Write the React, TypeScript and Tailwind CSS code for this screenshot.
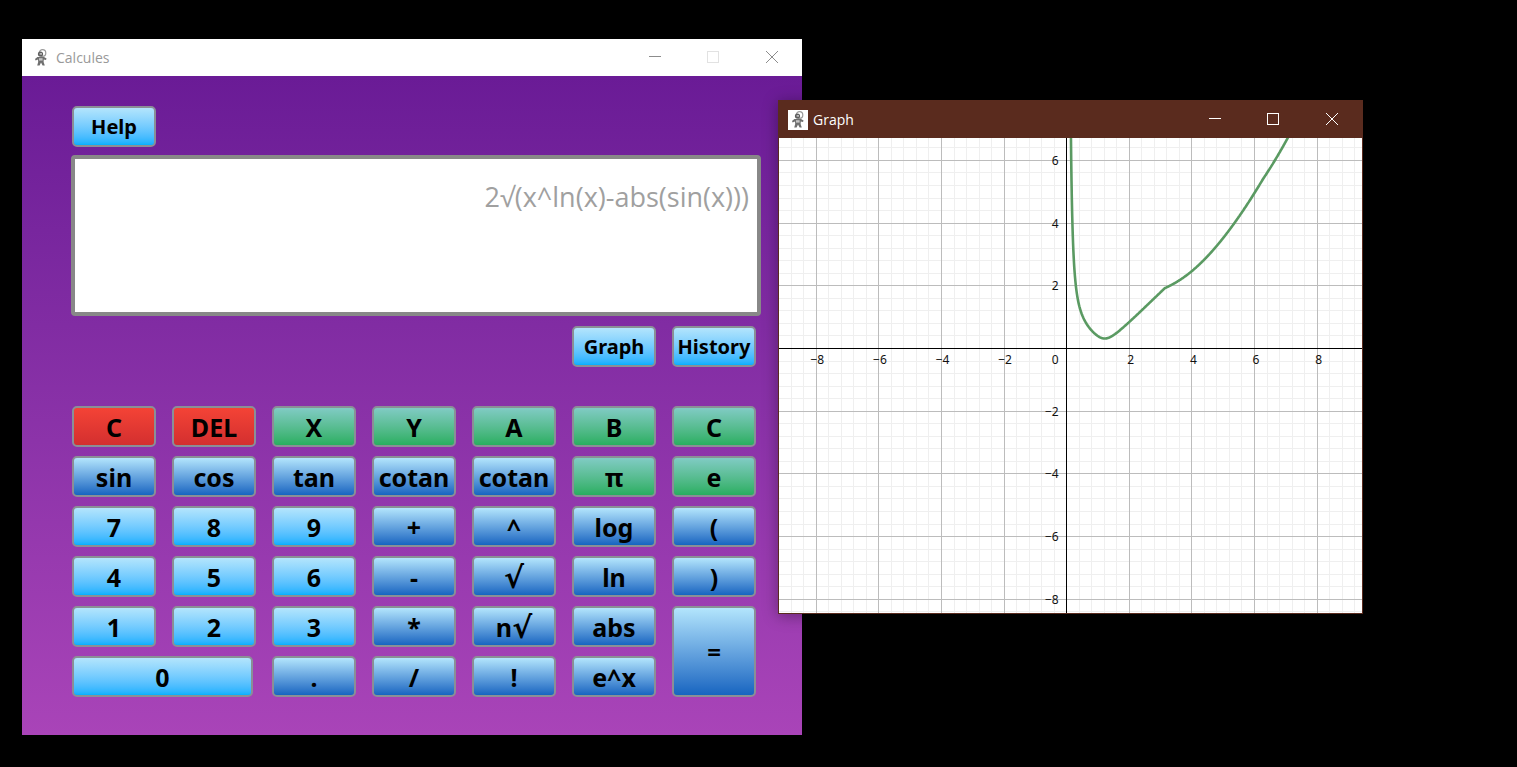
import React from "react";

const btnBase =
  "flex items-center justify-center rounded-[5px] border-2 border-[#8a8f96] font-bold text-black leading-none [font-family:'Noto_Sans',sans-serif]";
const variants: Record<string, string> = {
  num: "bg-gradient-to-b from-[#b3e5fc] to-[#00b0ff]",
  op: "bg-gradient-to-b from-[#b3e5fc] to-[#1565c0]",
  red: "bg-gradient-to-b from-[#f44336] to-[#d32f2f]",
  green: "bg-gradient-to-b from-[#80cbc4] to-[#27ae60]",
};

function Btn({
  label,
  v,
  className = "",
  size = "text-[25px] pt-[2px]",
}: {
  label: React.ReactNode;
  v: string;
  className?: string;
  size?: string;
}) {
  return <div className={`${btnBase} ${variants[v]} ${size} ${className}`}>{label}</div>;
}

function Root() {
  return <span className="text-[30px] leading-none [font-family:'DejaVu_Sans',sans-serif]">√</span>;
}

function Astronaut({ className }: { className: string }) {
  return (
    <svg viewBox="0 0 18 18" className={className}>
      <circle cx="10.5" cy="4" r="3.3" fill="none" stroke="#9a9a9a" strokeWidth="1.2" />
      <circle cx="8.5" cy="5" r="2.6" fill="#5e5e5e" />
      <rect x="7.6" y="4.2" width="2.4" height="1.4" fill="#cfcfcf" />
      <path d="M5.4 8 L12 8 L14.6 9.6 L14 11 L11.8 10.4 L11.6 13 L12.8 16.6 L10.6 16.6 L9 13.6 L7.6 16.6 L5.2 16.6 L6.2 13 L6 10.6 L3.6 11.4 L3 10 Z" fill="#6f6f6f" />
      <rect x="7" y="9.2" width="3.6" height="2.4" fill="#c4c4c4" />
    </svg>
  );
}

const UNIT_X = 31.3;
const UNIT_Y = 31.35;
const X0 = 287.7;
const Y0 = 210.5;
const W = 583;
const H = 475;
const snap = (v: number) => Math.floor(v) + 0.5;

function curve() {
  const pts: string[] = [];
  for (let x = 0.02; x < 8; x += 0.01) {
    const lx = Math.log(x);
    const v = Math.pow(x, lx) - Math.abs(Math.sin(x));
    if (v < 0) continue;
    const y = Math.sqrt(v);
    const py = Y0 - y * UNIT_Y;
    if (py < -40) continue;
    pts.push(`${(X0 - 0.2 + x * UNIT_X).toFixed(2)},${py.toFixed(2)}`);
  }
  return "M" + pts.join(" L");
}

function Plot() {
  const minor: React.ReactNode[] = [];
  const major: React.ReactNode[] = [];
  const labels: React.ReactNode[] = [];
  for (let i = -50; i <= 50; i++) {
    const x = snap(X0 + i * 0.4 * UNIT_X);
    const y = snap(Y0 - i * 0.4 * UNIT_Y);
    const isMajor = i % 5 === 0;
    const target = isMajor ? major : minor;
    const stroke = isMajor ? "#bcbcbc" : "#efefef";
    if (i !== 0) {
      if (x >= 0 && x <= W) target.push(<line key={`v${i}`} x1={x} x2={x} y1={0} y2={H} stroke={stroke} strokeWidth={1} />);
      if (y >= 0 && y <= H) target.push(<line key={`h${i}`} x1={0} x2={W} y1={y} y2={y} stroke={stroke} strokeWidth={1} />);
    }
  }
  const textProps = { fontSize: 12, fill: "#111", fontFamily: "'Noto Sans', sans-serif" };
  for (const n of [-8, -6, -4, -2, 2, 4, 6, 8]) {
    const s = n < 0 ? `−${-n}` : `${n}`;
    labels.push(
      <text key={`x${n}`} x={X0 + n * UNIT_X + (n < 0 ? 1 : 1.5)} y={Y0 + 15} textAnchor="middle" {...textProps}>
        {s}
      </text>,
    );
    if (n !== 8) {
      labels.push(
        <text key={`y${n}`} x={X0 - 8} y={Y0 - n * UNIT_Y + 4.5} textAnchor="end" {...textProps}>
          {s}
        </text>,
      );
    }
  }
  labels.push(
    <text key="zero" x={X0 - 8} y={Y0 + 15} textAnchor="end" {...textProps}>
      0
    </text>,
  );
  return (
    <svg width={W} height={H} viewBox={`0 0 ${W} ${H}`} className="block bg-white">
      {minor}
      {major}
      <line x1={0} x2={W} y1={Y0} y2={Y0} stroke="#000" strokeWidth={1} />
      <line x1={snap(X0)} x2={snap(X0)} y1={0} y2={H} stroke="#000" strokeWidth={1} />
      {labels}
      <path d={curve()} fill="none" stroke="#5a9a62" strokeWidth={2.6} strokeLinejoin="round" />
    </svg>
  );
}

function WinControls({ color, maxColor }: { color: string; maxColor: string }) {
  return (
    <svg width="174" height="14" viewBox="0 0 174 14" className="ml-auto block self-start mt-[12px]">
      <line x1="21" x2="33" y1="5.5" y2="5.5" stroke={color} strokeWidth="1" />
      <rect x="79.5" y="0.5" width="11" height="11" fill="none" stroke={maxColor} strokeWidth="1" />
      <path d="M138 0 L150 12 M150 0 L138 12" fill="none" stroke={color} strokeWidth="1" />
    </svg>
  );
}

export default function App() {
  return (
    <div className="relative h-[767px] w-[1517px] overflow-hidden bg-black">
      {/* Calculator window */}
      <div className="absolute left-[22px] top-[39px] flex h-[696px] w-[780px] flex-col">
        <div className="flex h-[37px] shrink-0 items-center bg-white pl-[10px]">
          <Astronaut className="h-[18px] w-[18px]" />
          <span className="ml-[6px] text-[14px] text-[#999999] [font-family:'Open_Sans',sans-serif]">Calcules</span>
          <WinControls color="#8c8c8c" maxColor="#e2e2e2" />
        </div>
        <div className="flex flex-1 flex-col bg-gradient-to-b from-[#6a1b96] to-[#a944b8] pl-[50px] pt-[30px]">
          <Btn label="Help" v="num" size="text-[20px]" className="h-[41px] w-[84px]" />
          <div className="-ml-[1px] mt-[8px] flex h-[161px] w-[690px] items-start justify-end rounded-[4px] border-4 border-[#888888] bg-white pr-[8px] pt-[20px]">
            <span className="text-[27px] leading-[36px] text-[#a0a0a0] [font-family:'Open_Sans',sans-serif]">
              2√(x^ln(x)-abs(sin(x)))
            </span>
          </div>
          <div className="mt-[10px] flex w-[684px] justify-end gap-4">
            <Btn label="Graph" v="num" size="text-[20px]" className="h-[41px] w-[84px]" />
            <Btn label="History" v="num" size="text-[20px]" className="h-[41px] w-[84px]" />
          </div>
          <div className="mt-[39px] grid w-[684px] grid-cols-[repeat(7,84px)] grid-rows-[repeat(6,41px)] gap-x-4 gap-y-[9px]">
            <Btn label="C" v="red" />
            <Btn label="DEL" v="red" />
            <Btn label="X" v="green" />
            <Btn label="Y" v="green" />
            <Btn label="A" v="green" />
            <Btn label="B" v="green" />
            <Btn label="C" v="green" />

            <Btn label="sin" v="op" />
            <Btn label="cos" v="op" />
            <Btn label="tan" v="op" />
            <Btn label="cotan" v="op" />
            <Btn label="cotan" v="op" />
            <Btn label="π" v="green" />
            <Btn label="e" v="green" />

            <Btn label="7" v="num" />
            <Btn label="8" v="num" />
            <Btn label="9" v="num" />
            <Btn label="+" v="op" />
            <Btn label="^" v="op" />
            <Btn label="log" v="op" />
            <Btn label="(" v="op" />

            <Btn label="4" v="num" />
            <Btn label="5" v="num" />
            <Btn label="6" v="num" />
            <Btn label="-" v="op" />
            <Btn label={<Root />} v="op" />
            <Btn label="ln" v="op" />
            <Btn label=")" v="op" />

            <Btn label="1" v="num" />
            <Btn label="2" v="num" />
            <Btn label="3" v="num" />
            <Btn label="*" v="op" />
            <Btn label={<>n<Root /></>} v="op" />
            <Btn label="abs" v="op" />
            <Btn label="=" v="op" size="text-[24px]" className="row-span-2" />

            <Btn label="0" v="num" className="col-span-2 w-[181px]" />
            <Btn label="." v="op" />
            <Btn label="/" v="op" />
            <Btn label="!" v="op" />
            <Btn label="e^x" v="op" />
          </div>
        </div>
      </div>

      {/* Graph window */}
      <div className="absolute left-[778px] top-[100px] flex w-[585px] flex-col border border-[#5a2b1e] shadow-[0_2px_14px_rgba(0,0,0,0.35)]">
        <div className="flex h-[37px] shrink-0 items-center bg-[#5a2b1e] pl-[9px]">
          <div className="flex h-[20px] w-[20px] items-center justify-center bg-white">
            <Astronaut className="h-[18px] w-[18px]" />
          </div>
          <span className="ml-[5px] text-[14px] text-white [font-family:'Open_Sans',sans-serif]">Graph</span>
          <WinControls color="#ffffff" maxColor="#ffffff" />
        </div>
        <Plot />
      </div>
    </div>
  );
}
